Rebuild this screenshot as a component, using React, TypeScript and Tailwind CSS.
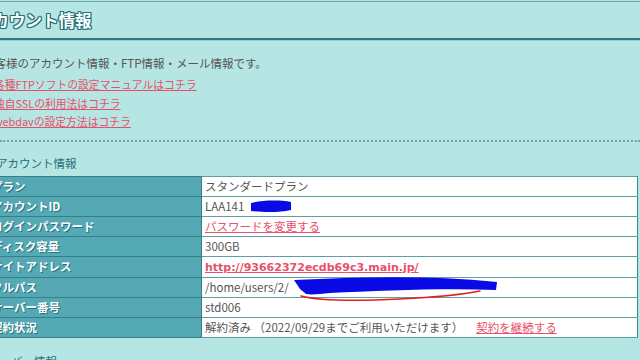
import React from "react";

const rows: { label: string; value: React.ReactNode }[] = [
  { label: "プラン", value: "スタンダードプラン" },
  { label: "アカウントID", value: "LAA141" },
  {
    label: "ログインパスワード",
    value: <a className="text-[#e94f69] underline">パスワードを変更する</a>,
  },
  { label: "ディスク容量", value: "300GB" },
  {
    label: "サイトアドレス",
    value: (
      <a className="text-[#e94f69] underline font-bold text-[11px] font-['DejaVu_Sans','Noto_Sans_CJK_JP',sans-serif]">
        http://93662372ecdb69c3.main.jp/
      </a>
    ),
  },
  { label: "フルパス", value: "/home/users/2/" },
  { label: "サーバー番号", value: "std006" },
  {
    label: "契約状況",
    value: (
      <span>
        解約済み （2022/09/29までご利用いただけます）
        <a className="ml-[13px] text-[#e94f69] underline">契約を継続する</a>
      </span>
    ),
  },
];

export default function App() {
  return (
    <div className="relative w-[640px] h-[360px] overflow-hidden bg-[#b5e6e3] font-['Noto_Sans_CJK_JP',sans-serif] text-[#555]">
      <div className="h-[1px] mt-[1px] bg-[#6f9fa2]" />
      <div className="h-[36px] flex items-center -ml-[24px]">
        <span className="text-[16.5px] font-bold text-white leading-none [text-shadow:1px_1px_0_#1f6f78,-1px_-1px_0_#1f6f78,1px_-1px_0_#1f6f78,-1px_1px_0_#1f6f78,0_1px_0_#1f6f78,0_-1px_0_#1f6f78,1px_0_0_#1f6f78,-1px_0_0_#1f6f78]">
          アカウント情報
        </span>
      </div>
      <div className="h-[2px] bg-[#2a7a83]" />
      <div className="h-[1px] bg-[#8fd0d2]" />
      <div className="-ml-[17px] mt-[13px] text-[11.5px] leading-[18px]">
        お客様のアカウント情報・FTP情報・メール情報です。
      </div>
      <div className="-ml-[6px] mt-[3px] flex flex-col items-start text-[10.8px] leading-[18.5px] text-[#e94f69]">
        <a className="underline">各種FTPソフトの設定マニュアルはコチラ</a>
        <a className="underline">独自SSLの利用法はコチラ</a>
        <a className="underline">webdavの設定方法はコチラ</a>
      </div>
      <div className="mt-[9px] border-t-2 border-dotted border-[#6aa9ab]" />
      <div className="-ml-[4px] mt-[12px] text-[11.5px] leading-[18px] text-[#2c6d76]">
        アカウント情報
      </div>
      <div className="relative mt-[4px] -ml-[12px] w-[650px]">
        <table className="w-full border-collapse text-[11.5px]">
          <tbody>
            {rows.map((r) => (
              <tr key={r.label} className="h-[20px]">
                <td className="w-[213px] bg-[#54a9b5] border border-[#357f88] pl-[2px] py-0 font-bold text-white leading-[19px] [text-shadow:1px_1px_0_#2b6f78]">
                  {r.label}
                </td>
                <td className="bg-white border border-[#5f9ea2] border-r-[#3a8a92] pl-[3px] py-0 leading-[19px]">
                  {r.value}
                </td>
              </tr>
            ))}
          </tbody>
        </table>
        <svg
          className="absolute left-0 top-0 pointer-events-none"
          width="650"
          height="170"
        >
          <g transform="translate(12,-175)">
            <path
              d="M251 202 C262 199 280 199 291 201 L291 209 C278 212 262 211 251 210 Z"
              fill="#0a0ae6"
            />
            <path
              d="M294 279 C360 276 430 274 497 281 L496 289 C440 287 380 290 330 292 C320 293 312 294 306 293 L300 288 Z"
              fill="#0a0ae6"
            />
            <path
              d="M304 286 C340 283 390 282 430 283"
              stroke="#0a0ae6"
              strokeWidth="5"
              fill="none"
              strokeLinecap="round"
            />
            <path
              d="M301 295 C320 300 360 300 400 298 C440 296 470 292 480 290"
              stroke="#e0201e"
              strokeWidth="1.5"
              fill="none"
              strokeLinecap="round"
            />
          </g>
        </svg>
      </div>
      <div className="-ml-[12px] mt-[14px] text-[11.5px] leading-[18px] text-[#2c6d76]">
        サーバー情報
      </div>
    </div>
  );
}
